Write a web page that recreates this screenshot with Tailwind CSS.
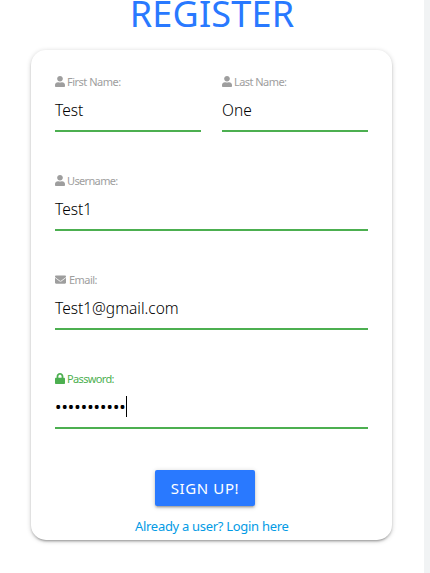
<!DOCTYPE html>
<html lang="en">
<head>
<meta charset="utf-8">
<title>Register</title>
<script src="https://cdn.jsdelivr.net/npm/@tailwindcss/browser@4"></script>
</head>
<body class="h-[573px] overflow-hidden bg-[#f1f3f4] font-['Noto_Sans',sans-serif]">
<svg class="hidden">
  <symbol id="user" viewBox="0 0 448 512" preserveAspectRatio="none"><path d="M224 256c70.700 0 128-57.300 128-128S294.700 0 224 0 96 57.300 96 128s57.300 128 128 128zm89.600 32h-16.700c-22.200 10.200-46.900 16-72.900 16s-50.600-5.800-72.900-16h-16.700C60.200 288 0 348.200 0 422.400V464c0 26.500 21.500 48 48 48h352c26.500 0 48-21.500 48-48v-41.600c0-74.200-60.200-134.400-134.400-134.400z"/></symbol>
  <symbol id="mail" viewBox="0 0 512 512"><path d="M502.300 190.800c3.900-3.100 9.700-.2 9.700 4.700V400c0 26.500-21.500 48-48 48H48c-26.500 0-48-21.500-48-48V195.600c0-5 5.700-7.800 9.700-4.700 22.400 17.400 52.100 39.500 154.100 113.600 21.100 15.400 56.700 47.800 92.200 47.600 35.700.3 72-32.800 92.300-47.600 102-74.100 131.600-96.300 154-113.700zM256 320c23.200.4 56.600-29.200 73.400-41.400 132.700-96.300 142.800-104.700 173.400-128.700 5.800-4.500 9.200-11.500 9.200-18.900v-19c0-26.500-21.500-48-48-48H48c-26.500 0-48 21.500-48 48v19c0 7.400 3.400 14.300 9.200 18.900 30.600 23.900 40.700 32.400 173.400 128.700 16.800 12.200 50.200 41.800 73.400 41.400z"/></symbol>
  <symbol id="lock" viewBox="0 0 448 512" preserveAspectRatio="none"><path d="M400 224h-24v-72C376 68.200 307.800 0 224 0S72 68.200 72 152v72H48c-26.500 0-48 21.500-48 48v192c0 26.500 21.500 48 48 48h352c26.500 0 48-21.500 48-48V272c0-26.500-21.500-48-48-48zm-104 0H152v-72c0-39.700 32.300-72 72-72s72 32.300 72 72v72z"/></symbol>
</svg>
<main class="flex h-[573px] w-[424px] flex-col items-center bg-white">
  <h1 class="-mt-[5px] h-[38px] whitespace-nowrap text-[36px] leading-[38px] tracking-[0.200px] text-[#2979ff]">REGISTER</h1>
  <form class="mt-[17px] mr-[1px] flex h-[490px] w-[361px] flex-col rounded-[15px] bg-white px-6 pt-6 shadow-[0_2px_2px_0_rgba(0,0,0,0.14),0_3px_1px_-2px_rgba(0,0,0,0.12),0_1px_5px_0_rgba(0,0,0,0.2)]">
    <div class="flex gap-[21px]">
      <div class="h-[99px] flex-1">
        <div class="flex h-4 items-start gap-[2px] text-[#9e9e9e]"><svg class="mt-[2px] h-[11px] w-[10px] fill-current"><use href="#user"/></svg><span class="whitespace-nowrap text-[11px] leading-4 tracking-[-0.500px]">First Name:</span></div>
        <div class="flex h-[42px] items-center border-b-2 border-[#4caf50] pt-[2px] text-[15.500px] font-[350] text-black"><span>Test</span></div>
      </div>
      <div class="h-[99px] flex-1">
        <div class="flex h-4 items-start gap-[2px] text-[#9e9e9e]"><svg class="mt-[2px] h-[11px] w-[10px] fill-current"><use href="#user"/></svg><span class="whitespace-nowrap text-[11px] leading-4 tracking-[-0.550px]">Last Name:</span></div>
        <div class="flex h-[42px] items-center border-b-2 border-[#4caf50] pt-[2px] text-[15.500px] font-[350] text-black"><span>One</span></div>
      </div>
    </div>
    <div class="h-[99px]">
      <div class="flex h-4 items-start gap-[2px] text-[#9e9e9e]"><svg class="mt-[2px] h-[11px] w-[10px] fill-current"><use href="#user"/></svg><span class="whitespace-nowrap text-[11px] leading-4 tracking-[-0.650px]">Username:</span></div>
      <div class="flex h-[42px] items-center border-b-2 border-[#4caf50] pt-[2px] text-[15.500px] font-[350] text-black"><span>Test1</span></div>
    </div>
    <div class="h-[99px]">
      <div class="flex h-4 items-start gap-[3px] text-[#9e9e9e]"><svg class="mt-[2px] h-[11px] w-[11px] fill-current"><use href="#mail"/></svg><span class="whitespace-nowrap text-[11px] leading-4 tracking-[-0.550px]">Email:</span></div>
      <div class="flex h-[42px] items-center border-b-2 border-[#4caf50] pt-[2px] text-[15.500px] font-[350] text-black"><span>Test1@gmail.com</span></div>
    </div>
    <div class="h-[99px]">
      <div class="flex h-4 items-start gap-[2px] text-[#4caf50]"><svg class="mt-[2px] h-[11px] w-[10px] fill-current"><use href="#lock"/></svg><span class="whitespace-nowrap text-[11px] leading-4 tracking-[-0.650px]">Password:</span></div>
      <div class="flex h-[42px] items-center border-b-2 border-[#4caf50] text-[15px] text-black"><span class="w-[71px] whitespace-nowrap text-[17px] leading-5 tracking-[0.040px]">•••••••••••</span><i class="-mt-[2px] h-[21px] w-px bg-black"></i></div>
    </div>
    <button type="button" class="ml-[100px] h-9 w-[100px] shrink-0 rounded-[2px] bg-[#2979ff] text-[15px] tracking-[0.600px] whitespace-nowrap text-white shadow-[0_2px_2px_0_rgba(0,0,0,0.14),0_3px_1px_-2px_rgba(0,0,0,0.12),0_1px_5px_0_rgba(0,0,0,0.2)]">SIGN UP!</button>
    <a class="mt-[11px] ml-[80px] text-[13px] leading-[18px] tracking-[-0.300px] whitespace-nowrap text-[#039be5]">Already a user? Login here</a>
  </form>
</main>
</body>
</html>
